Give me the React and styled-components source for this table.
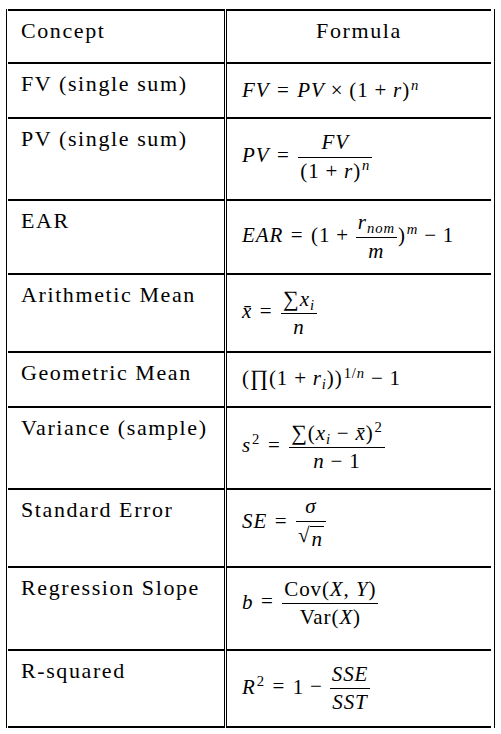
import React from 'react';
import styled, { createGlobalStyle } from 'styled-components';

const Global = createGlobalStyle`
  html, body {
    margin: 0;
    padding: 0;
    background: #fff;
  }
`;

// outer double rule: 1px line, 1px gap, 1px line on both sides
const Table = styled.div`
  margin: 9px 0 0 6px;
  width: 489px;
  border-left: 1px solid #000;
  border-right: 1px solid #000;
  box-sizing: border-box;
  padding: 0 1px;
  background: #fff;
`;

const Row = styled.div`
  display: grid;
  grid-template-columns: 216px 3px 264px;
  height: ${(p) => p.$h}px;
`;

const Sep = styled.div`
  border-left: 1px solid #000;
  border-right: 1px solid #000;
`;

const Cell = styled.div`
  border-top: 2px solid #000;
  border-bottom: ${(p) => (p.$last ? '2px solid #000' : 'none')};
  box-sizing: border-box;
  min-width: 0;
`;

const Label = styled(Cell)`
  padding: 8px 13px 0;
  font-family: 'Liberation Serif', 'Times New Roman', serif;
  font-size: 22px;
  letter-spacing: 1.6px;
  line-height: 24px;
  color: #000;
  text-align: ${(p) => (p.$center ? 'center' : 'left')};
  white-space: nowrap;
`;

const FormulaCell = styled(Cell)`
  display: flex;
  align-items: center;
  padding: 0 0 ${(p) => p.$lift || 0}px 15px;
  font-family: 'Liberation Serif', 'Times New Roman', serif;
  font-size: 21px;
  letter-spacing: 0.9px;
  color: #000;
  white-space: nowrap;
`;

const Math = styled.span`
  display: inline-block;
  line-height: 1.2;
`;

const I = styled.i`
  font-style: italic;
`;

const Rel = styled.span`
  margin: 0 0.36em;
`;

const Bin = styled.span`
  margin: 0 0.28em;
`;

const Sup = styled.sup`
  font-size: 0.7em;
  line-height: 0;
  vertical-align: 0.5em;
  margin-left: 1px;
`;

const Sub = styled.sub`
  font-size: 0.7em;
  line-height: 0;
  vertical-align: -0.25em;
`;

const Frac = styled.span`
  display: inline-flex;
  flex-direction: column;
  align-items: center;
  vertical-align: middle;
  margin: 0 1px;
`;

const Num = styled.span`
  display: block;
  padding: 0 2px 1px;
  border-bottom: 1px solid #000;
  align-self: stretch;
  text-align: center;
`;

const Den = styled.span`
  display: block;
  padding: 1px 2px 0;
  text-align: center;
`;

const Root = styled.span`
  display: inline-flex;
  align-items: flex-start;
`;

const Radicand = styled.span`
  border-top: 1px solid #000;
  margin-top: 3px;
  padding: 0 1px;
`;

const Big = styled.span`
  font-size: 1.05em;
`;

const rows = [
  {
    h: 53,
    label: 'Concept',
    header: true,
  },
  {
    h: 55,
    label: 'FV (single sum)',
    math: (
      <>
        <I>FV</I><Rel>=</Rel><I>PV</I><Bin>×</Bin>(1<Bin>+</Bin><I>r</I>)<Sup><I>n</I></Sup>
      </>
    ),
  },
  {
    h: 82,
    label: 'PV (single sum)',
    lift: 4,
    math: (
      <>
        <I>PV</I><Rel>=</Rel>
        <Frac>
          <Num><I>FV</I></Num>
          <Den>(1<Bin>+</Bin><I>r</I>)<Sup><I>n</I></Sup></Den>
        </Frac>
      </>
    ),
  },
  {
    h: 74,
    label: 'EAR',
    math: (
      <>
        <I>EAR</I><Rel>=</Rel>(1<Bin>+</Bin>
        <Frac>
          <Num><I>r</I><Sub><I>nom</I></Sub></Num>
          <Den><I>m</I></Den>
        </Frac>
        )<Sup><I>m</I></Sup><Bin>−</Bin>1
      </>
    ),
  },
  {
    h: 78,
    label: 'Arithmetic Mean',
    math: (
      <>
        <I>x̄</I><Rel>=</Rel>
        <Frac>
          <Num><Big>∑</Big><I>x</I><Sub><I>i</I></Sub></Num>
          <Den><I>n</I></Den>
        </Frac>
      </>
    ),
  },
  {
    h: 55,
    label: 'Geometric Mean',
    lift: 2,
    math: (
      <>
        (<Big>∏</Big>(1<Bin>+</Bin><I>r</I><Sub><I>i</I></Sub>))<Sup>1/<I>n</I></Sup><Bin>−</Bin>1
      </>
    ),
  },
  {
    h: 82,
    label: 'Variance (sample)',
    lift: 2,
    math: (
      <>
        <I>s</I><Sup>2</Sup><Rel>=</Rel>
        <Frac>
          <Num><Big>∑</Big>(<I>x</I><Sub><I>i</I></Sub><Bin>−</Bin><I>x̄</I>)<Sup>2</Sup></Num>
          <Den><I>n</I><Bin>−</Bin>1</Den>
        </Frac>
      </>
    ),
  },
  {
    h: 78,
    label: 'Standard Error',
    lift: 10,
    math: (
      <>
        <I>SE</I><Rel>=</Rel>
        <Frac>
          <Num><I>σ</I></Num>
          <Den><Root>√<Radicand><I>n</I></Radicand></Root></Den>
        </Frac>
      </>
    ),
  },
  {
    h: 83,
    label: 'Regression Slope',
    lift: 10,
    math: (
      <>
        <I>b</I><Rel>=</Rel>
        <Frac>
          <Num>Cov(<I>X</I>, <I>Y</I>)</Num>
          <Den>Var(<I>X</I>)</Den>
        </Frac>
      </>
    ),
  },
  {
    h: 77,
    label: 'R-squared',
    last: true,
    math: (
      <>
        <I>R</I><Sup>2</Sup><Rel>=</Rel>1<Bin>−</Bin>
        <Frac>
          <Num><I>SSE</I></Num>
          <Den><I>SST</I></Den>
        </Frac>
      </>
    ),
  },
];

export default function App() {
  return (
    <>
      <Global />
      <Table>
        {rows.map((r) => (
          <Row key={r.label} $h={r.last ? r.h + 2 : r.h}>
            <Label $last={r.last}>{r.label}</Label>
            <Sep />
            {r.header ? (
              <Label $center>Formula</Label>
            ) : (
              <FormulaCell $last={r.last} $lift={r.lift}>
                <Math>{r.math}</Math>
              </FormulaCell>
            )}
          </Row>
        ))}
      </Table>
    </>
  );
}
